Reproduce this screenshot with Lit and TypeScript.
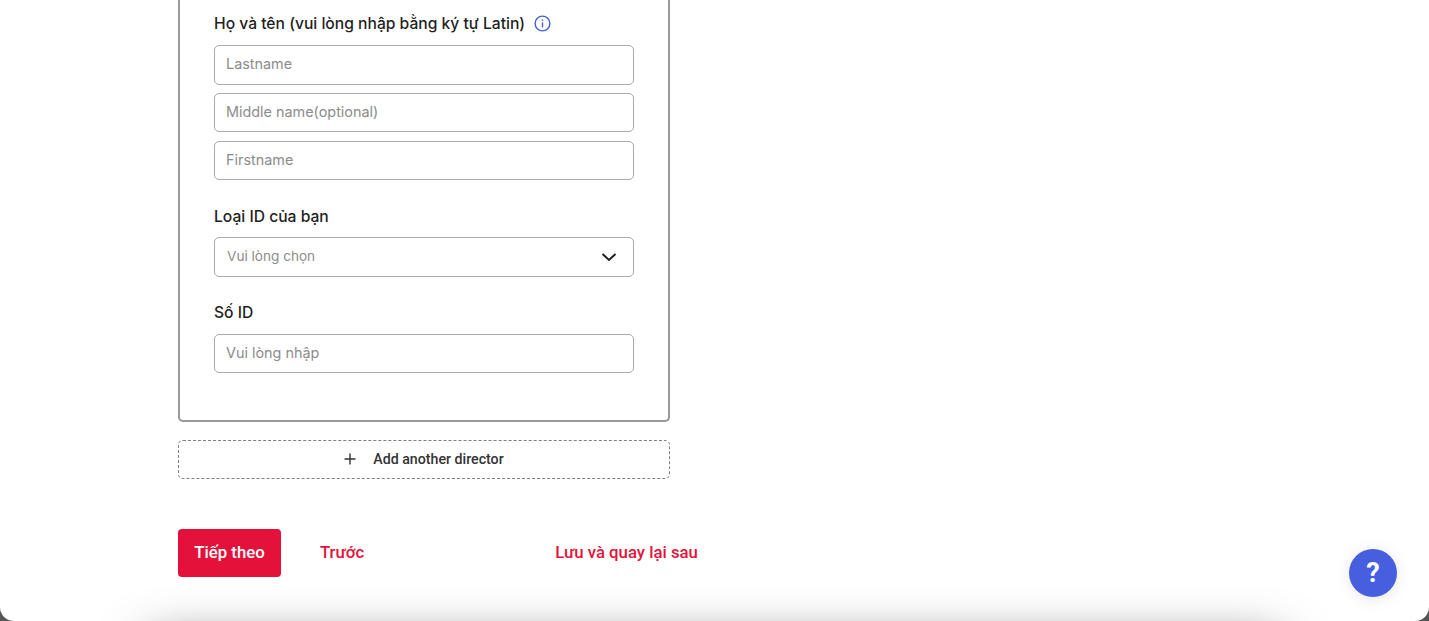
import {customElement} from "lit/decorators.js";
import {css, html, LitElement} from "lit";

@customElement("app-root")
export class AppRoot extends LitElement {

    static styles = css`
        :host {
            display: block;
            height: 621px;
            overflow: hidden;
            background: #555;
            font-family: Inter, "Noto Sans", sans-serif;
        }

        .page {
            position: relative;
            height: 621px;
            box-sizing: border-box;
            padding-left: 178px;
            overflow: hidden;
            background: #fff;
            border-radius: 0 0 14px 14px;
        }

        /* soft shadow of whatever sits below the window */
        .page::after {
            content: "";
            position: absolute;
            left: 150px;
            right: 150px;
            top: 645px;
            height: 30px;
            box-shadow: 0 0 50px 0 rgba(0, 0, 0, 0.7);
        }

        .card {
            box-sizing: border-box;
            width: 492px;
            height: 421.5px;
            padding: 13px 34px 0;
            border: 2px solid #999;
            border-top: none;
            border-radius: 0 0 5px 5px;
        }

        .label {
            display: flex;
            align-items: center;
            gap: 9px;
            box-sizing: border-box;
            height: 20px;
            padding-top: 1px;
            font-size: 15.65px;
            font-weight: 500;
            line-height: 20px;
            color: #1f1f1f;
        }

        .label svg {
            display: block;
            margin-top: -1px;
        }

        .stack {
            display: flex;
            flex-direction: column;
            gap: 8.25px;
            margin-top: 12px;
        }

        .field {
            display: flex;
            align-items: center;
            justify-content: space-between;
            box-sizing: border-box;
            width: 420px;
            height: 39.5px;
            padding: 0 16px 2px 11px;
            border: 1px solid #aaa;
            border-radius: 5px;
            font-size: 14.4px;
            color: #8c8c8c;
        }

        .field.select {
            padding-left: 12px;
            font-size: 13.6px;
        }

        .field.select svg {
            margin-top: 2px;
        }

        .group {
            margin-top: 26px;
        }

        .group .stack {
            margin-top: 11px;
        }

        .add {
            display: flex;
            align-items: center;
            justify-content: center;
            gap: 17px;
            box-sizing: border-box;
            width: 492px;
            height: 39.5px;
            margin-top: 18px;
            border: 1px dashed #808080;
            border-radius: 5px;
            font-family: Roboto, sans-serif;
            font-size: 14.2px;
            font-weight: 500;
            color: #333;
        }

        .actions {
            display: flex;
            align-items: center;
            margin-top: 50px;
            font-family: Roboto, sans-serif;
            font-size: 16.75px;
            font-weight: 500;
            color: #e4123a;
        }

        .next {
            display: flex;
            align-items: center;
            justify-content: center;
            box-sizing: border-box;
            width: 103px;
            height: 48px;
            margin-right: 39px;
            padding-bottom: 3px;
            border-radius: 4px;
            background: #e4123a;
            color: #fff;
        }

        .prev,
        .later {
            padding-bottom: 3px;
        }

        .later {
            margin-left: 191px;
        }

        .help {
            position: absolute;
            left: 1349px;
            top: 549px;
            display: flex;
            align-items: center;
            justify-content: center;
            width: 48px;
            height: 48px;
            border-radius: 50%;
            background: #465fdf;
            box-shadow: 0 2px 16px rgba(0, 0, 0, 0.1);
            font-family: Roboto, sans-serif;
            font-size: 27px;
            font-weight: 700;
            color: #fff;
        }
    `;

    private infoIcon() {
        return html`
            <svg width="17" height="17" viewBox="0 0 17 17" fill="none" stroke="#465fdf" stroke-width="1.4">
                <circle cx="8.5" cy="8.5" r="7.4"></circle>
                <path d="M8.5 7.4V12.4" stroke-width="1.4"></path>
                <path d="M8.5 4.4V5.8" stroke-width="1.5"></path>
            </svg>
        `;
    }

    protected render() {
        return html`
            <div class="page">
                <div class="card">
                    <div class="label">Họ và tên (vui lòng nhập bằng ký tự Latin) ${this.infoIcon()}</div>
                    <div class="stack">
                        <div class="field">Lastname</div>
                        <div class="field">Middle name(optional)</div>
                        <div class="field">Firstname</div>
                    </div>
                    <div class="group">
                        <div class="label">Loại ID của bạn</div>
                        <div class="stack">
                            <div class="field select">
                                Vui lòng chọn
                                <svg width="16" height="10" viewBox="0 0 16 10" fill="none" stroke="#1f1f1f" stroke-width="2">
                                    <path d="M1.5 2L8 8L14.5 2"></path>
                                </svg>
                            </div>
                        </div>
                    </div>
                    <div class="group">
                        <div class="label">Số ID</div>
                        <div class="stack">
                            <div class="field">Vui lòng nhập</div>
                        </div>
                    </div>
                </div>
                <div class="add">
                    <svg width="12" height="12" viewBox="0 0 12 12" fill="none" stroke="#333" stroke-width="1.4">
                        <path d="M6 0.5V11.5M0.5 6H11.5"></path>
                    </svg>
                    Add another director
                </div>
                <div class="actions">
                    <div class="next">Tiếp theo</div>
                    <div class="prev">Trước</div>
                    <div class="later">Lưu và quay lại sau</div>
                </div>
                <div class="help">?</div>
            </div>
        `;
    }
}
